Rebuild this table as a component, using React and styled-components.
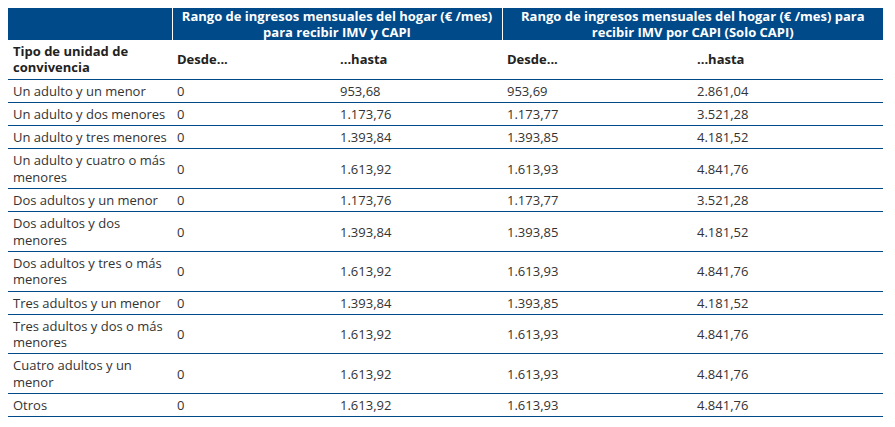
import React from 'react';
import styled, { createGlobalStyle } from 'styled-components';

const GlobalStyle = createGlobalStyle`
  body {
    margin: 8px;
    background: #fff;
    font-family: 'Open Sans', 'Liberation Sans', sans-serif;
  }
`;

const Table = styled.table`
  width: 875px;
  border-collapse: collapse;
  table-layout: fixed;
  font-size: 13px;
  line-height: 16.3px;
  color: #333;
`;

const GroupCell = styled.th`
  background: #004a8a;
  color: #fff;
  font-weight: 700;
  line-height: 16px;
  text-align: center;
  vertical-align: middle;
  padding: 0 5px;
  height: 32px;
  border-left: ${(p) => (p.$first ? 'none' : '1px solid #fff')};
`;

const HeadCell = styled.th`
  font-weight: 700;
  color: #222;
  text-align: left;
  vertical-align: middle;
  padding: 3px 5px;
  border-bottom: 1px solid #004a8a;
`;

const Row = styled.tr`
  border-bottom: 1px solid #004a8a;
`;

const Cell = styled.td`
  padding: 3px 5px;
  vertical-align: middle;
  text-align: left;
`;

const rows = [
  ['Un adulto y un menor', '0', '953,68', '953,69', '2.861,04'],
  ['Un adulto y dos menores', '0', '1.173,76', '1.173,77', '3.521,28'],
  ['Un adulto y tres menores', '0', '1.393,84', '1.393,85', '4.181,52'],
  ['Un adulto y cuatro o más menores', '0', '1.613,92', '1.613,93', '4.841,76'],
  ['Dos adultos y un menor', '0', '1.173,76', '1.173,77', '3.521,28'],
  ['Dos adultos y dos menores', '0', '1.393,84', '1.393,85', '4.181,52'],
  ['Dos adultos y tres o más menores', '0', '1.613,92', '1.613,93', '4.841,76'],
  ['Tres adultos y un menor', '0', '1.393,84', '1.393,85', '4.181,52'],
  ['Tres adultos y dos o más menores', '0', '1.613,92', '1.613,93', '4.841,76'],
  ['Cuatro adultos y un menor', '0', '1.613,92', '1.613,93', '4.841,76'],
  ['Otros', '0', '1.613,92', '1.613,93', '4.841,76'],
];

const App = () => {
  return (
    <>
      <GlobalStyle />
      <Table>
        <colgroup>
          <col style={{ width: 164 }} />
          <col style={{ width: 163 }} />
          <col style={{ width: 167 }} />
          <col style={{ width: 190 }} />
          <col style={{ width: 191 }} />
        </colgroup>
        <thead>
          <tr>
            <GroupCell $first />
            <GroupCell colSpan={2}>
              Rango de ingresos mensuales del hogar (€ /mes) para recibir IMV y CAPI
            </GroupCell>
            <GroupCell colSpan={2}>
              Rango de ingresos mensuales del hogar (€ /mes) para recibir IMV por CAPI (Solo CAPI)
            </GroupCell>
          </tr>
          <tr>
            <HeadCell>Tipo de unidad de convivencia</HeadCell>
            <HeadCell>Desde...</HeadCell>
            <HeadCell>...hasta</HeadCell>
            <HeadCell>Desde...</HeadCell>
            <HeadCell>...hasta</HeadCell>
          </tr>
        </thead>
        <tbody>
          {rows.map((r) => (
            <Row key={r[0]}>
              {r.map((v, i) => (
                <Cell key={i}>{v}</Cell>
              ))}
            </Row>
          ))}
        </tbody>
      </Table>
    </>
  );
};

export default App;
